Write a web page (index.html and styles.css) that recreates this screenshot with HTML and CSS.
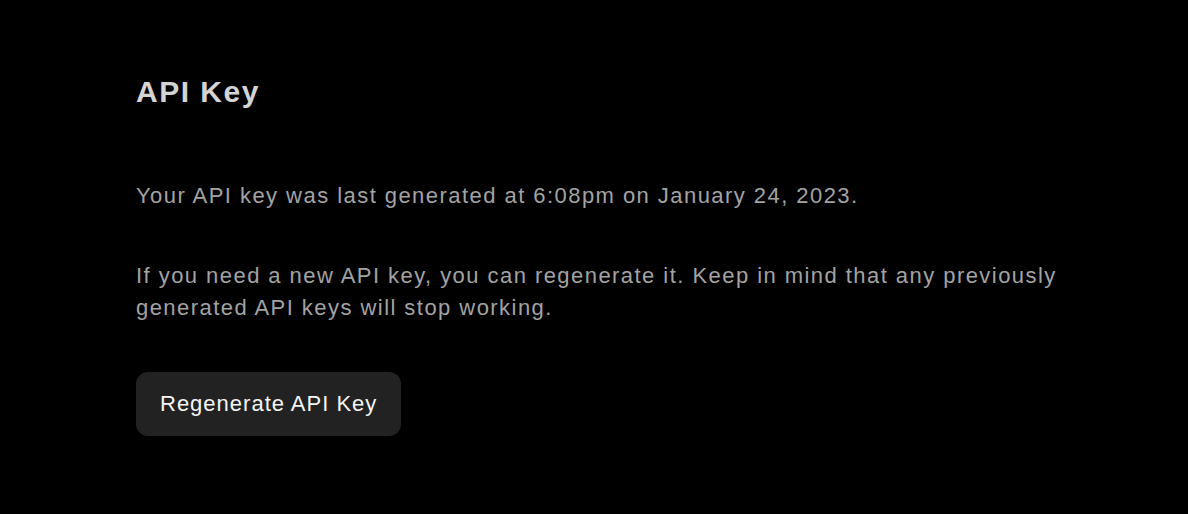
FILE: index.html
```html
<!DOCTYPE html>
<html>
<head>
<meta charset="utf-8">
<link rel="stylesheet" href="styles.css">
</head>
<body>
<main class="page">
  <section class="card">
    <h1 class="title">API Key</h1>
    <p class="text first">Your API key was last generated at 6:08pm on January 24, 2023.</p>
    <p class="text">If you need a new API key, you can regenerate it. Keep in mind that any previously generated API keys will stop working.</p>
    <button class="btn">Regenerate API Key</button>
  </section>
</main>
</body>
</html>
```
FILE: styles.css
```css
html, body {
  margin: 0;
  padding: 0;
  background: #000;
}
body {
  font-family: "Liberation Sans", Arial, sans-serif;
}
.page {
  padding: 72px 40px 0 136px;
}
.card {
  display: flex;
  flex-direction: column;
  align-items: flex-start;
  max-width: 945px;
}
.title {
  margin: 0;
  font-size: 30px;
  line-height: 40px;
  font-weight: 700;
  color: #d4d4d4;
  letter-spacing: 1.5px;
}
.text {
  margin: 0;
  font-size: 22px;
  line-height: 32px;
  color: #a3a3a3;
  letter-spacing: 1.45px;
}
.text.first {
  margin-top: 68px;
  margin-bottom: 48px;
}
.btn {
  margin-top: 48px;
  height: 64px;
  padding: 0 24px;
  border: 0;
  border-radius: 12px;
  background: #222222;
  color: #f5f5f5;
  font-family: inherit;
  font-size: 22px;
  letter-spacing: 1px;
}
```
